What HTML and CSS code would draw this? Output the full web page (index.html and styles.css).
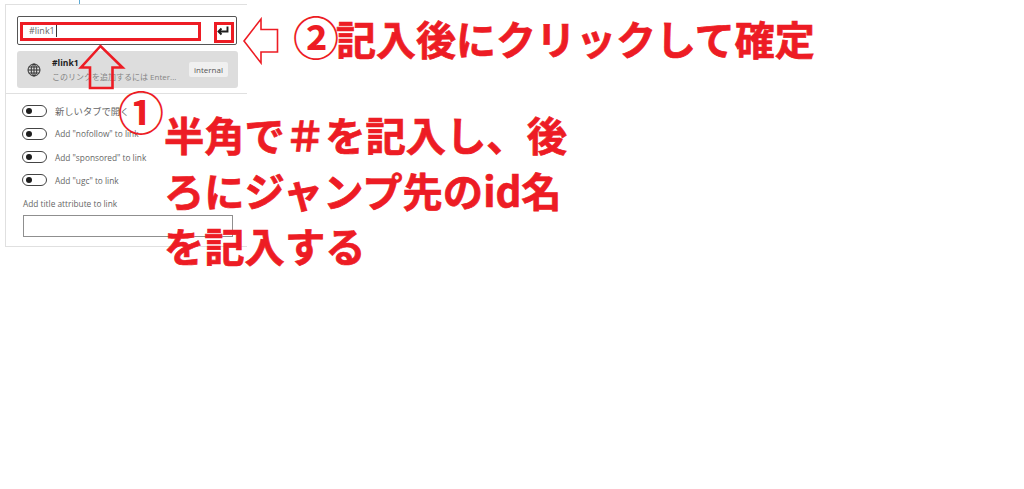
FILE: index.html
```html
<!DOCTYPE html>
<html lang="ja">
<head>
    <meta charset="UTF-8">
    <title>Link settings</title>
    <link rel="stylesheet" href="styles.css">
</head>
<body>
    <div class="editor-line"></div>
    <div class="link-panel">
        <div class="search-box">
            <span class="search-value">#link1</span>
            <svg class="enter-icon" width="12" height="10" viewBox="0 0 12 10"><path d="M10.500 0.500V5.500H2M4.500 2.500L1.500 5.500L4.500 8.500" fill="none" stroke="#1e1e1e" stroke-width="1.9"/></svg>
        </div>
        <div class="result">
            <svg class="globe" width="14" height="14" viewBox="0 0 14 14" fill="none" stroke="#333" stroke-width="1"><circle cx="7" cy="7" r="6"/><ellipse cx="7" cy="7" rx="2.8" ry="6"/><path d="M1 7H13M1.800 4H12.200M1.800 10H12.200M7 1V13"/></svg>
            <div class="result-text">
                <div class="result-title">#link1</div>
                <div class="result-hint">このリンクを追加するには Enter...</div>
            </div>
            <span class="badge">internal</span>
        </div>
        <div class="options">
            <div class="option option-ja"><span class="toggle"></span>新しいタブで開く</div>
            <div class="option"><span class="toggle"></span>Add "nofollow" to link</div>
            <div class="option"><span class="toggle"></span>Add "sponsored" to link</div>
            <div class="option"><span class="toggle"></span>Add "ugc" to link</div>
            <div class="title-label">Add title attribute to link</div>
            <div class="title-input"></div>
        </div>
    </div>

    <!-- annotations drawn over the screenshot -->
    <div class="mark mark-input"></div>
    <div class="mark mark-button"></div>
    <svg class="arrows" width="1024" height="489" fill="none" stroke="#ed1c24">
        <path stroke-width="2.6" d="M100.500 46L81 67.500H90V88H112.500V67.500H122.500Z"/>
        <path stroke-width="1.6" d="M244 41L261 19V29.500H277.500V52H261V63Z"/>
    </svg>
    <div class="note note-one">①</div>
    <div class="note note-two"><span class="circled">②</span>記入後にクリックして確定</div>
    <div class="note note-body">半角で＃を記入し、後<br>ろにジャンプ先のid名<br>を記入する</div>
</body>
</html>
```

FILE: styles.css
```css
body {
    margin: 0;
    height: 489px;
    overflow: hidden;
    position: relative;
    background-color: #fff;
    font-family: "Open Sans", "Noto Sans CJK JP", sans-serif;
}
.editor-line {
    width: 1px;
    height: 4px;
    margin-left: 79px;
    background-color: #5aa9d6;
}
.link-panel {
    width: 242px;
    height: 243px;
    margin-left: 5px;
    box-sizing: border-box;
    border: 1px solid #e0e0e0;
    border-right: none;
    padding-top: 11px;
}
.search-box {
    display: flex;
    align-items: center;
    justify-content: space-between;
    width: 220px;
    height: 29px;
    margin-left: 11px;
    box-sizing: border-box;
    border: 1px solid #555;
    border-radius: 2px;
    padding: 0 7px 0 11px;
}
.search-value {
    font-size: 9px;
    color: #666;
    border-right: 1px solid #333;
    padding-right: 1px;
}
.result {
    display: flex;
    align-items: center;
    width: 221px;
    height: 37px;
    margin: 6px 0 0 11px;
    padding: 0 10px;
    box-sizing: border-box;
    background-color: #ddd;
    border-radius: 3px;
}
.globe {
    flex: none;
}
.result-text {
    flex: 1;
    margin-left: 11px;
    min-width: 0;
}
.result-title {
    font-size: 8.600px;
    font-weight: 700;
    line-height: 13px;
    color: #1e1e1e;
}
.result-hint {
    font-size: 8px;
    line-height: 13px;
    color: #858585;
    white-space: nowrap;
}
.badge {
    flex: none;
    font-size: 8px;
    line-height: 15px;
    padding: 0 5px;
    color: #555;
    background-color: #f0f0f0;
    border-radius: 2px;
}
.options {
    margin-top: 5px;
    border-top: 1px solid #e0e0e0;
    padding: 10px 0 0 16px;
}
.option {
    display: flex;
    align-items: center;
    height: 13px;
    margin-bottom: 10.300px;
    font-size: 8.300px;
    color: #666;
}
.option-ja {
    font-size: 9.300px;
}
.toggle {
    position: relative;
    width: 23px;
    height: 10px;
    margin-right: 8px;
    border: 1px solid #444;
    border-radius: 6px;
}
.toggle::after {
    content: "";
    position: absolute;
    top: 2px;
    left: 3px;
    width: 6px;
    height: 6px;
    border-radius: 50%;
    background-color: #1e1e1e;
}
.title-label {
    margin-top: 11px;
    margin-left: 1px;
    font-size: 8.300px;
    line-height: 12px;
    color: #666;
}
.title-input {
    width: 208px;
    height: 20px;
    margin-top: 5px;
    margin-left: 1px;
    border: 1px solid #8f8f8f;
}
.mark {
    position: absolute;
    box-sizing: border-box;
    border: 3px solid #ed1c24;
}
.mark-input {
    left: 20px;
    top: 22px;
    width: 181px;
    height: 19px;
}
.mark-button {
    left: 214px;
    top: 22px;
    width: 20px;
    height: 21px;
}
.arrows {
    position: absolute;
    left: 0;
    top: 0;
}
.note {
    position: absolute;
    font-family: "Noto Sans CJK JP", sans-serif;
    font-weight: 700;
    font-size: 40px;
    color: #ed1c24;
    white-space: nowrap;
    -webkit-text-stroke: 0.7px #ed1c24;
}
.note-one {
    left: 118px;
    top: 80px;
    font-size: 46px;
    line-height: 60px;
    -webkit-text-stroke: 0;
}
.note-two {
    left: 296px;
    top: 8px;
    line-height: 60px;
}
.circled {
    display: inline-block;
    width: 40px;
    font-size: 46px;
    line-height: 40px;
    margin-left: -3px;
    margin-right: 3px;
    -webkit-text-stroke: 0;
}
.note-body {
    left: 164px;
    top: 106px;
    font-size: 40.300px;
    line-height: 55.500px;
}
```
